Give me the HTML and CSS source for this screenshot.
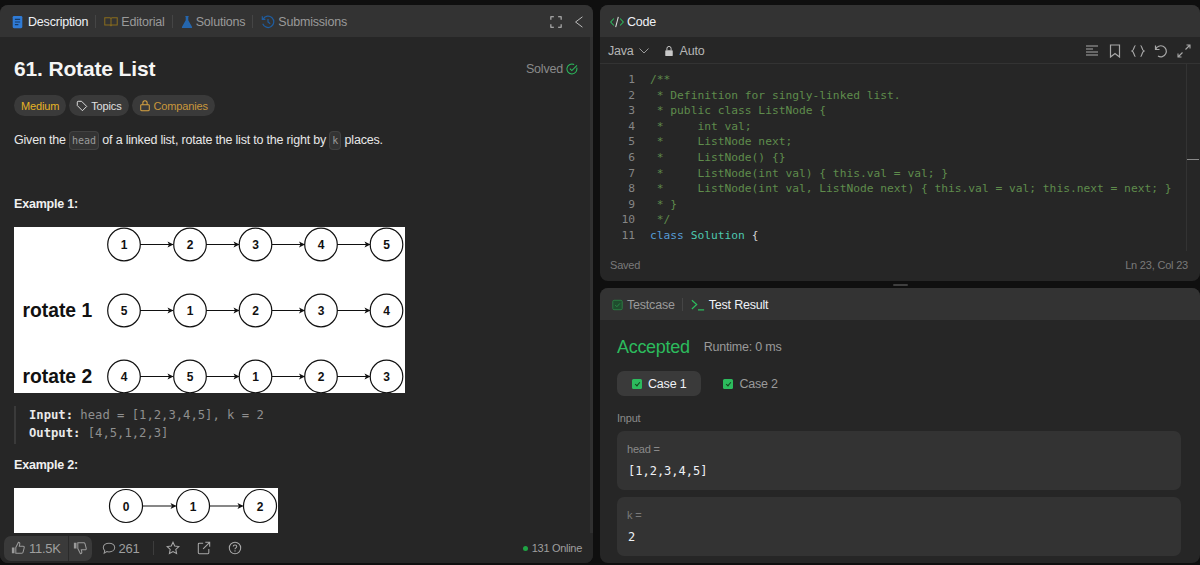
FILE: index.html
```html
<!DOCTYPE html>
<html lang="en">
<head>
    <meta charset="UTF-8">
    <meta name="viewport" content="width=device-width, initial-scale=1.0">
    <title>61. Rotate List</title>
    <link rel="stylesheet" href="styles.css">
</head>
<body>
    <!-- Problem panel -->
    <section class="panel left-panel">
        <div class="panel-head">
            <div class="tab active first-tab">
                <svg class="tab-icon" viewBox="0 0 12 16"><rect x=".5" y="1" width="11" height="14" rx="1.500" fill="#2f7bd6"/><path d="M3 5h6M3 8h6M3 11h4" stroke="#173a66" stroke-width="1.200"/></svg>
                Description
            </div>
            <span class="tab-sep"></span>
            <div class="tab">
                <svg class="tab-icon wide" viewBox="0 0 18 16"><path d="M1 2.500h6.500c.8 0 1.500.6 1.500 1.500v9.500c0-.8-.7-1.500-1.500-1.500H1zM17 2.500h-6.500c-.8 0-1.500.6-1.500 1.500v9.500c0-.8.7-1.500 1.500-1.500H17z" fill="none" stroke="#8a6d1d" stroke-width="1.300"/></svg>
                Editorial
            </div>
            <span class="tab-sep"></span>
            <div class="tab">
                <svg class="tab-icon mid" viewBox="0 0 14 16"><path d="M5 1h4v1H8.500v4l4.300 7.500c.4.800 0 1.500-.9 1.500H2.100c-.9 0-1.300-.7-.9-1.500L5.500 6V2H5z" fill="#2566ad"/></svg>
                Solutions
            </div>
            <span class="tab-sep"></span>
            <div class="tab">
                <svg class="tab-icon wide" viewBox="0 0 16 16"><path d="M2.500 4.500A6.500 6.500 0 1 1 2 10M1.500 1.500v3.500H5M8 4.500V8l2.500 2" fill="none" stroke="#1f5c9e" stroke-width="1.400"/></svg>
                Submissions
            </div>
            <div class="head-actions">
                <svg class="head-icon" viewBox="0 0 14 14"><path d="M1 4.500V1h3.500M9.500 1H13v3.500M13 9.500V13H9.500M4.500 13H1V9.500" fill="none" stroke="#c4c4c4" stroke-width="1.200"/></svg>
                <svg class="head-icon" viewBox="0 0 14 14"><path d="M11 1 3 7l8 6" fill="none" stroke="#c4c4c4" stroke-width="1.100"/></svg>
            </div>
        </div>

        <div class="problem">
            <div class="title-row">
                <h1>61. Rotate List</h1>
                <span class="solved">Solved
                    <svg viewBox="0 0 14 14"><path d="M12.500 5.500A5.800 5.800 0 1 1 9.500 1.800" fill="none" stroke="#2cbb5d" stroke-width="1.200"/><path d="m4.500 6.500 2.300 2.300L12.800 2.800" fill="none" stroke="#2cbb5d" stroke-width="1.200"/></svg>
                </span>
            </div>
            <div class="chips">
                <span class="chip medium">Medium</span>
                <span class="chip">
                    <svg viewBox="0 0 14 14"><path d="M1.500 2.500c0-.6.4-1 1-1h4l6 6-5 5-6-6z" fill="none" stroke="#e6e6e6" stroke-width="1.100"/></svg>
                    Topics
                </span>
                <span class="chip companies">
                    <svg viewBox="0 0 14 14"><rect x="2" y="5.500" width="10" height="7" rx="1" fill="none" stroke="#d9a441" stroke-width="1.200"/><path d="M4.500 5.500V3.500a2.500 2.500 0 0 1 5 0v2" fill="none" stroke="#d9a441" stroke-width="1.200"/></svg>
                    Companies
                </span>
            </div>
            <p class="statement">Given the <code>head</code> of a linked list, rotate the list to the right by <code>k</code> places.</p>

            <h2 class="example-title first">Example 1:</h2>
            <svg class="diagram" width="391" height="166" viewBox="0 0 391 166">
                <rect width="391" height="166" fill="#fff"/>
                <defs>
                    <g id="chain">
                        <g fill="none" stroke="#111" stroke-width="1.200">
                            <circle cx="110" cy="0" r="16.300"/>
                            <circle cx="176" cy="0" r="16.300"/>
                            <circle cx="241.500" cy="0" r="16.300"/>
                            <circle cx="307" cy="0" r="16.300"/>
                            <circle cx="372.500" cy="0" r="16.300"/>
                            <path d="M126 0h33M192 0h33M258 0h33M323 0h33"/>
                        </g>
                        <path d="m159.500 0-6-3 1.500 3-1.500 3zM225.500 0l-6-3 1.500 3-1.500 3zM291 0l-6-3 1.500 3-1.500 3zM356.500 0l-6-3 1.500 3-1.500 3z" fill="#111"/>
                    </g>
                </defs>
                <use href="#chain" y="17.500"/>
                <use href="#chain" y="83.500"/>
                <use href="#chain" y="149.500"/>
                <g class="node-label">
                    <text x="110" y="22">1</text><text x="176" y="22">2</text><text x="241.500" y="22">3</text><text x="307" y="22">4</text><text x="372.500" y="22">5</text>
                    <text x="110" y="88">5</text><text x="176" y="88">1</text><text x="241.500" y="88">2</text><text x="307" y="88">3</text><text x="372.500" y="88">4</text>
                    <text x="110" y="154">4</text><text x="176" y="154">5</text><text x="241.500" y="154">1</text><text x="307" y="154">2</text><text x="372.500" y="154">3</text>
                </g>
                <text class="rotate-label" x="8.500" y="90">rotate 1</text>
                <text class="rotate-label" x="8.500" y="156">rotate 2</text>
            </svg>
            <pre class="example-io"><strong>Input:</strong> head = [1,2,3,4,5], k = 2
<strong>Output:</strong> [4,5,1,2,3]</pre>

            <h2 class="example-title">Example 2:</h2>
            <svg class="diagram" width="264" height="90" viewBox="0 0 264 90">
                <rect width="264" height="90" fill="#fff"/>
                <g fill="none" stroke="#111" stroke-width="1.200">
                    <circle cx="112" cy="18" r="16.500"/>
                    <circle cx="179" cy="18" r="16.500"/>
                    <circle cx="246" cy="18" r="16.500"/>
                    <path d="M128.500 18h33M195.500 18h33"/>
                </g>
                <path d="m162.500 18-6-3 1.500 3-1.500 3zM229.500 18l-6-3 1.500 3-1.500 3z" fill="#111"/>
                <g class="node-label">
                    <text x="112" y="23">0</text><text x="179" y="23">1</text><text x="246" y="23">2</text>
                </g>
            </svg>
        </div>

        <div class="problem-foot">
            <div class="vote">
                <span class="vote-up">
                    <svg viewBox="0 0 16 16"><path d="M1 7.500h3V14H1z" fill="#9a9a9a"/><path d="M5.500 7.500 8.500 1.500c1.200 0 1.800 1 1.500 2.200L9.500 6H14c.8 0 1.300.7 1.100 1.500l-1.300 5.300c-.2.700-.7 1.200-1.400 1.200H5.500z" fill="none" stroke="#9a9a9a" stroke-width="1.200"/></svg>
                    11.5K
                </span>
                <span class="vote-down">
                    <svg viewBox="0 0 16 16"><path d="M1 2h3v6.500H1z" fill="#9a9a9a"/><path d="M5.500 8.500 8.500 14.500c1.200 0 1.800-1 1.500-2.200L9.500 10H14c.8 0 1.300-.7 1.100-1.500L13.800 3.200C13.600 2.500 13.100 2 12.400 2H5.500z" fill="none" stroke="#9a9a9a" stroke-width="1.200"/></svg>
                </span>
            </div>
            <span class="foot-item">
                <svg viewBox="0 0 16 16"><path d="M8 2.500c3.700 0 6.500 2.200 6.500 5s-2.800 5-6.500 5c-.9 0-1.700-.1-2.500-.4L2.500 14l.6-3C2 10 1.500 8.800 1.500 7.500c0-2.800 2.800-5 6.500-5z" fill="none" stroke="#9a9a9a" stroke-width="1.200"/></svg>
                261
            </span>
            <span class="foot-sep"></span>
            <svg class="foot-icon" viewBox="0 0 16 16"><path d="m8 1.500 2 4.300 4.700.6-3.500 3.200.9 4.700L8 12l-4.100 2.300.9-4.700-3.500-3.200 4.700-.6z" fill="none" stroke="#a8a8a8" stroke-width="1.200"/></svg>
            <svg class="foot-icon" viewBox="0 0 16 16"><path d="M7 2.500H2.500c-.6 0-1 .4-1 1v10c0 .6.4 1 1 1h10c.6 0 1-.4 1-1V9M9.500 1.500h5v5M14.500 1.500 7 9" fill="none" stroke="#a8a8a8" stroke-width="1.200"/></svg>
            <svg class="foot-icon" viewBox="0 0 16 16"><circle cx="8" cy="8" r="6.500" fill="none" stroke="#a8a8a8" stroke-width="1.200"/><path d="M6 6.300C6 5.100 6.900 4.500 8 4.500s2 .7 2 1.800c0 1.500-2 1.500-2 3" fill="none" stroke="#a8a8a8" stroke-width="1.200"/><circle cx="8" cy="11.300" r=".8" fill="#a8a8a8"/></svg>
            <span class="online"><i></i>131 Online</span>
        </div>
    </section>

    <div class="right-col">
        <!-- Editor panel -->
        <section class="panel code-panel">
            <div class="panel-head">
                <div class="tab active">
                    <svg class="tab-icon wide" viewBox="0 0 18 16"><path d="M5 3.500.9 8 5 12.500M13 3.500 17.100 8 13 12.500" fill="none" stroke="#2cbb5d" stroke-width="1.300"/><path d="M10.700 1.500 7.300 14.500" fill="none" stroke="#e0e0e0" stroke-width="1.300"/></svg>
                    Code
                </div>
            </div>
            <div class="toolbar">
                <span class="lang">Java
                    <svg viewBox="0 0 10 6"><path d="m.5.5 4.500 4.500L9.500.5" fill="none" stroke="#9a9a9a"/></svg>
                </span>
                <span class="auto">
                    <svg viewBox="0 0 12 14"><rect x="1.500" y="6" width="9" height="7" rx="1" fill="#c8c8c8"/><path d="M3.500 6V4a2.500 2.500 0 0 1 5 0v2" fill="none" stroke="#c8c8c8" stroke-width="1.200"/></svg>
                    Auto
                </span>
                <div class="tools">
                    <svg viewBox="0 0 14 14"><path d="M1 2h12M1 5h7M1 8h12M1 11h12" fill="none" stroke="#a8a8a8" stroke-width="1.100"/></svg>
                    <svg viewBox="0 0 14 14"><path d="M2.500 1h9v12L7 9.500 2.500 13z" fill="none" stroke="#a8a8a8" stroke-width="1.200"/></svg>
                    <svg viewBox="0 0 14 14"><path d="M4.500 1.500C2.800 1.500 3.500 6 1 7c2.500 1 1.800 5.500 3.500 5.500M9.500 1.500c1.700 0 1 4.500 3.500 5.500-2.500 1-1.800 5.500-3.500 5.500" fill="none" stroke="#a8a8a8" stroke-width="1.200"/></svg>
                    <svg viewBox="0 0 14 14"><path d="M1.500 1.500v4H5.500M1.700 5.300A5.500 5.500 0 1 1 4 12" fill="none" stroke="#a8a8a8" stroke-width="1.200"/></svg>
                    <svg viewBox="0 0 14 14"><path d="M8.500 5.500 13 1M9.500 1H13v3.500M5.500 8.500 1 13M4.500 13H1V9.500" fill="none" stroke="#a8a8a8" stroke-width="1.100"/></svg>
                </div>
            </div>
            <div class="editor">
                <div class="code-lines">
                    <div class="line"><span class="num">1</span><span class="cm">/**</span></div>
                    <div class="line"><span class="num">2</span><span class="cm"> * Definition for singly-linked list.</span></div>
                    <div class="line"><span class="num">3</span><span class="cm"> * public class ListNode {</span></div>
                    <div class="line"><span class="num">4</span><span class="cm"> *     int val;</span></div>
                    <div class="line"><span class="num">5</span><span class="cm"> *     ListNode next;</span></div>
                    <div class="line"><span class="num">6</span><span class="cm"> *     ListNode() {}</span></div>
                    <div class="line"><span class="num">7</span><span class="cm"> *     ListNode(int val) { this.val = val; }</span></div>
                    <div class="line"><span class="num">8</span><span class="cm"> *     ListNode(int val, ListNode next) { this.val = val; this.next = next; }</span></div>
                    <div class="line"><span class="num">9</span><span class="cm"> * }</span></div>
                    <div class="line"><span class="num">10</span><span class="cm"> */</span></div>
                    <div class="line"><span class="num">11</span><span class="src"><span class="kw">class</span> <span class="type">Solution</span> <span class="brace">{</span></span></div>
                </div>
                <div class="minimap"><span class="mini-mark"></span></div>
            </div>
            <div class="status">
                <span>Saved</span>
                <span>Ln 23, Col 23</span>
            </div>
        </section>

        <div class="drag-bar"><span></span></div>

        <!-- Result panel -->
        <section class="panel result-panel">
            <div class="panel-head">
                <div class="tab">
                    <svg class="tab-icon" viewBox="0 0 14 14"><rect x="1" y="1" width="12" height="12" rx="1.500" fill="#1f4d2e" stroke="#2b8a47"/><path d="m4 7 2.200 2.200L10 5" fill="none" stroke="#2b8a47" stroke-width="1.200"/></svg>
                    Testcase
                </div>
                <span class="tab-sep"></span>
                <div class="tab active">
                    <svg class="tab-icon wide" viewBox="0 0 16 14"><path d="m1 1.500 5.500 5L1 11.500M8 12.500h7" fill="none" stroke="#2cbb5d" stroke-width="1.400"/></svg>
                    Test Result
                </div>
            </div>
            <div class="result">
                <div class="verdict">
                    <span class="accepted">Accepted</span>
                    <span class="runtime">Runtime: 0 ms</span>
                </div>
                <div class="cases">
                    <span class="case current"><i class="case-check"></i>Case 1</span>
                    <span class="case"><i class="case-check"></i>Case 2</span>
                </div>
                <div class="input-label">Input</div>
                <div class="value-box">
                    <div class="value-name">head =</div>
                    <div class="value">[1,2,3,4,5]</div>
                </div>
                <div class="value-box">
                    <div class="value-name dim">k =</div>
                    <div class="value">2</div>
                </div>
            </div>
        </section>
    </div>
</body>
</html>
```

FILE: styles.css
```css
/* General */
* {
    box-sizing: border-box;
}

body {
    margin: 0;
    height: 565px;
    padding: 5px 0 2px;
    display: flex;
    gap: 7px;
    overflow: hidden;
    background: #0f0f0f;
    color: #eff1f6;
    font-family: "Liberation Sans", Arial, sans-serif;
    font-size: 12.5px;
    letter-spacing: -0.2px;
}

svg {
    display: block;
    flex: none;
}

.panel {
    display: flex;
    flex-direction: column;
    background: #262626;
    border-radius: 8px;
    overflow: hidden;
}

.left-panel {
    width: 593px;
}

.right-col {
    flex: 1;
    min-width: 0;
    display: flex;
    flex-direction: column;
}

/* Panel header and tabs */
.panel-head {
    height: 32px;
    flex: none;
    display: flex;
    align-items: center;
    padding: 1px 8.500px 0 10px;
    background: #333;
}

.tab {
    display: flex;
    align-items: center;
    gap: 3px;
    color: #9a9a9a;
    white-space: nowrap;
}

.tab.active {
    color: #eff1f6;
}

.first-tab {
    gap: 5px;
    padding-left: 2px;
}

.result-panel .panel-head {
    padding-left: 12px;
}

.result-panel .tab {
    gap: 4px;
}

.tab-icon {
    width: 11px;
    height: 14px;
}

.tab-icon.mid {
    width: 12px;
}

.tab-icon.wide {
    width: 14px;
}

.tab-sep {
    width: 1px;
    height: 13px;
    margin: 0 8px 0 7px;
    background: #454545;
}

.head-actions {
    margin-left: auto;
    display: flex;
    align-items: center;
    gap: 11px;
}

.head-icon {
    width: 12px;
    height: 12px;
}

/* Problem description */
.problem {
    flex: 1;
    min-height: 0;
    overflow: hidden;
    padding: 19px 11px 0 14px;
    border-right: 3px solid #303030;
}

.title-row {
    display: flex;
    align-items: center;
    justify-content: space-between;
    height: 26px;
    padding-right: 1px;
}

h1 {
    margin: 0;
    font-size: 21px;
    font-weight: 700;
    letter-spacing: -0.15px;
    color: #f5f5f5;
}

.solved {
    display: flex;
    align-items: center;
    gap: 3px;
    color: #8a8a8a;
}

.solved svg {
    width: 12px;
    height: 12px;
}

.chips {
    display: flex;
    gap: 3px;
    margin-top: 13px;
}

.chip {
    height: 21px;
    display: flex;
    align-items: center;
    gap: 3px;
    padding: 0 7px;
    border-radius: 11px;
    background: #3a3a3a;
    color: #e0e0e0;
    font-size: 11px;
    letter-spacing: -0.15px;
}

.chip svg {
    width: 12px;
    height: 12px;
}

.chip.medium {
    color: #e6b325;
}

.chip.companies {
    color: #c9973a;
}

.statement {
    margin: 14px 0 0;
    height: 20px;
    line-height: 20px;
    color: #e8e8e8;
}

.statement code {
    padding: 3px 2px;
    border: 1px solid #424242;
    border-radius: 4px;
    background: #333;
    color: #9a9a9a;
    font-family: "DejaVu Sans Mono", monospace;
    font-size: 10px;
    letter-spacing: 0;
}

.example-title {
    margin: 14px 0 0;
    height: 15px;
    line-height: 15px;
    font-size: 12.5px;
    font-weight: 700;
    color: #f0f0f0;
}

.example-title.first {
    margin-top: 47px;
}

.diagram {
    margin-top: 15px;
}

.node-label text {
    font-size: 12px;
    font-weight: 700;
    letter-spacing: 0;
    text-anchor: middle;
    fill: #111;
}

.rotate-label {
    font-size: 19.300px;
    font-weight: 700;
    letter-spacing: 0;
    fill: #111;
}

.example-io {
    margin: 13px 0 0;
    height: 38px;
    padding-left: 13px;
    border-left: 2px solid #3a3a3a;
    color: #8f8f8f;
    font-family: "DejaVu Sans Mono", monospace;
    font-size: 12.200px;
    letter-spacing: 0;
    line-height: 18px;
}

.example-io strong {
    color: #eaeaea;
}

/* Problem footer */
.problem-foot {
    height: 30px;
    flex: none;
    display: flex;
    align-items: center;
    padding: 0 11px 0 4px;
    background: #262626;
    color: #9f9f9f;
}

.vote {
    display: flex;
    height: 25px;
    border-radius: 7px;
    overflow: hidden;
    background: #3a3a3a;
}

.vote-up,
.vote-down {
    display: flex;
    align-items: center;
    gap: 4px;
    padding: 0 7px;
    font-size: 13px;
    letter-spacing: -0.3px;
}

.vote-up svg,
.vote-down svg {
    width: 14px;
    height: 14px;
}

.vote-down {
    padding: 0 5px 0 4px;
    border-left: 1px solid #2a2a2a;
}

.foot-item {
    display: flex;
    align-items: center;
    gap: 3px;
    margin-left: 10px;
    font-size: 13px;
    letter-spacing: -0.3px;
}

.foot-item svg {
    width: 14px;
    height: 14px;
}

.foot-sep {
    width: 1px;
    height: 14px;
    margin: 0 12px 0 14px;
    background: #3d3d3d;
}

.foot-icon {
    width: 14px;
    height: 14px;
    margin-right: 17px;
}

.online {
    margin-left: auto;
    display: flex;
    align-items: center;
    gap: 4px;
    font-size: 11px;
    letter-spacing: -0.3px;
}

.online i {
    width: 5px;
    height: 5px;
    border-radius: 50%;
    background: #1fa344;
}

/* Editor */
.code-panel {
    height: 276px;
    flex: none;
}

.toolbar {
    height: 27px;
    flex: none;
    display: flex;
    align-items: center;
    padding: 1px 9px 0 8px;
    border-bottom: 1px solid #333;
    color: #b5b5b5;
}

.lang {
    display: flex;
    align-items: center;
    gap: 5px;
}

.lang svg {
    width: 10px;
    height: 6px;
}

.auto {
    display: flex;
    align-items: center;
    gap: 6px;
    margin-left: 15px;
}

.auto svg {
    width: 10px;
    height: 12px;
}

.tools {
    margin-left: auto;
    display: flex;
    align-items: center;
    gap: 9px;
}

.tools svg {
    width: 14px;
    height: 14px;
}

.editor {
    flex: 1;
    min-height: 0;
    display: flex;
    overflow: hidden;
}

.code-lines {
    flex: 1;
    padding-top: 8px;
    font-family: "DejaVu Sans Mono", monospace;
    font-size: 11.250px;
    letter-spacing: 0;
    line-height: 15.600px;
}

.line {
    display: flex;
    height: 15.600px;
}

.num {
    width: 35px;
    margin-right: 15px;
    text-align: right;
    color: #858585;
}

.cm,
.src {
    white-space: pre;
}

.cm {
    color: #5f8c4c;
}

.kw {
    color: #569cd6;
}

.type {
    color: #4ec9b0;
}

.brace {
    color: #d4d4d4;
}

.minimap {
    position: relative;
    width: 14px;
    flex: none;
    border-left: 1px solid #333;
}

.mini-mark {
    position: absolute;
    top: 95px;
    left: 0;
    width: 12px;
    height: 1px;
    background: #8a8a8a;
}

.status {
    height: 30px;
    flex: none;
    display: flex;
    align-items: center;
    justify-content: space-between;
    padding: 0 12px 2px 10px;
    color: #7a7a7a;
    font-size: 11px;
}

.drag-bar {
    height: 7px;
    flex: none;
    display: flex;
    align-items: center;
    justify-content: center;
}

.drag-bar span {
    width: 15px;
    height: 2px;
    border-radius: 1px;
    background: #3f3f3f;
}

/* Test result */
.result-panel {
    flex: 1;
    min-height: 0;
}

.result {
    flex: 1;
    padding: 0 19px 0 17px;
}

.verdict {
    display: flex;
    align-items: center;
    gap: 14px;
    height: 26px;
    margin-top: 14px;
}

.accepted {
    color: #2cbb5d;
    font-size: 18px;
    letter-spacing: -0.3px;
}

.runtime {
    color: #9a9a9a;
}

.cases {
    display: flex;
    gap: 7px;
    margin-top: 11px;
}

.case {
    height: 25px;
    display: flex;
    align-items: center;
    gap: 6px;
    padding: 1px 15px 0;
    border-radius: 7px;
    color: #9a9a9a;
}

.case.current {
    background: #3a3a3a;
    color: #eff1f6;
}

.case-check {
    position: relative;
    width: 10px;
    height: 10px;
    border-radius: 1.500px;
    background: #2cbb5d;
}

.case-check::after {
    content: "";
    position: absolute;
    left: 3.500px;
    top: 1.500px;
    width: 2px;
    height: 4px;
    border: solid #14451f;
    border-width: 0 1px 1px 0;
    transform: rotate(40deg);
}

.input-label {
    margin-top: 15px;
    height: 14px;
    line-height: 14px;
    color: #8a8a8a;
    font-size: 11px;
}

.value-box {
    height: 59px;
    margin-top: 6px;
    padding: 12px 10px 0;
    border-radius: 7px;
    background: #333;
}

.value-box + .value-box {
    margin-top: 7px;
}

.value-name {
    height: 13px;
    line-height: 13px;
    color: #8a8a8a;
    font-size: 11px;
}

.value-name.dim {
    color: #7a7a7a;
}

.value {
    margin-top: 7px;
    padding-left: 1px;
    color: #eff1f6;
    font-family: "DejaVu Sans Mono", monospace;
    font-size: 12px;
    letter-spacing: 0;
    line-height: 16px;
}
```
